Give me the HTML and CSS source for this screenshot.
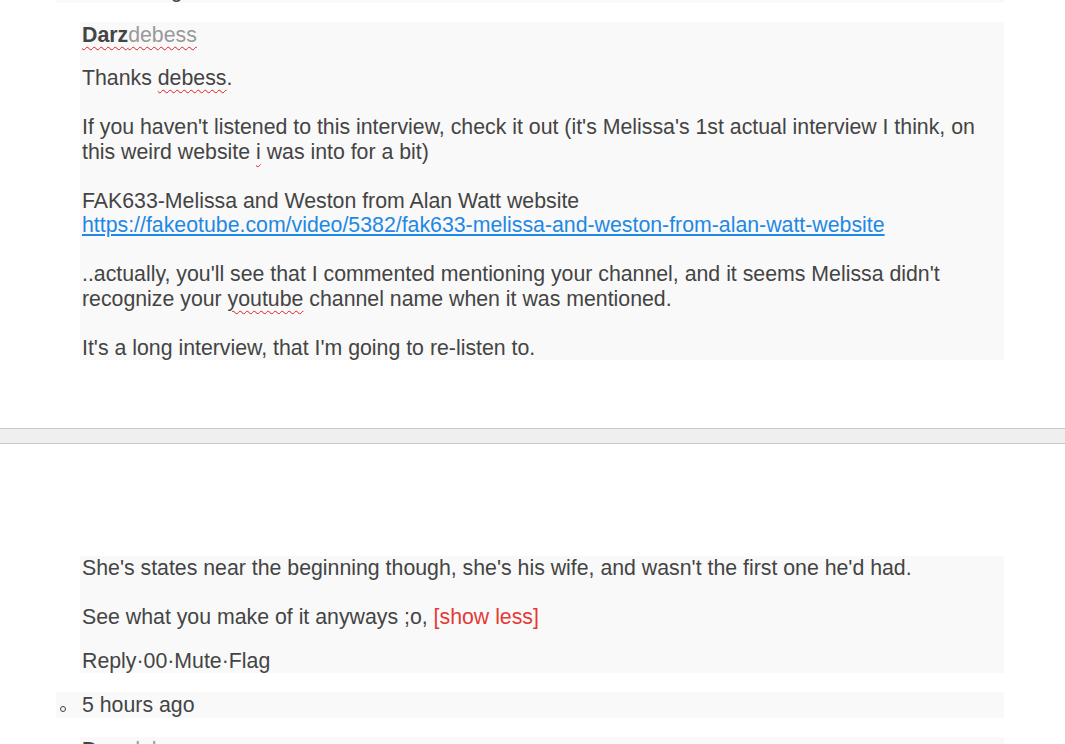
FILE: index.html
```html
<!DOCTYPE html>
<html>
<head>
<meta charset="utf-8">
<link rel="stylesheet" href="styles.css">
</head>
<body>
<div class="thread">
  <ul class="meta-list meta-list--top">
    <li class="meta-row">5 hours ago</li>
  </ul>
  <div class="comment">
    <div class="comment-head"><span class="spell"><b class="author">Darz</b><span class="reply-to">debess</span></span></div>
    <div class="comment-body">
      <p>Thanks <span class="spell">debess</span>.</p>
      <p>If you haven't listened to this interview, check it out (it's Melissa's 1st actual interview I think, on this weird website <span class="spell">i</span> was into for a bit)</p>
      <p>FAK633-Melissa and Weston from Alan Watt website<br><a class="link" href="#">https://fakeotube.com/video/5382/fak633-melissa-and-weston-from-alan-watt-website</a></p>
      <p>..actually, you'll see that I commented mentioning your channel, and it seems Melissa didn't recognize your <span class="spell">youtube</span> channel name when it was mentioned.</p>
      <p class="last">It's a long interview, that I'm going to re-listen to.</p>
    </div>
  </div>
</div>

<div class="separator"></div>

<div class="thread thread--second">
  <div class="comment">
    <div class="comment-body">
      <p>She's states near the beginning though, she's his wife, and wasn't the first one he'd had.</p>
      <p class="tight">See what you make of it anyways ;o, <a class="show-less" href="#">[show less]</a></p>
    </div>
    <div class="actions">Reply<span class="dot">·</span>00<span class="dot">·</span>Mute<span class="dot">·</span>Flag</div>
  </div>
  <ul class="meta-list">
    <li class="meta-row">5 hours ago</li>
  </ul>
  <div class="comment">
    <div class="comment-head"><span class="spell"><b class="author">Darz</b><span class="reply-to">debess</span></span></div>
  </div>
</div>
</body>
</html>
```
FILE: styles.css
```css
html, body {
  margin: 0;
  padding: 0;
  background: #ffffff;
}
body {
  font-family: "Liberation Sans", Arial, sans-serif;
  font-size: 21.3px;
  line-height: 24.5px;
  color: #444444;
  overflow: hidden;
}
.thread {
  margin: 0 61px 0 56px;
  display: flex;
  flex-direction: column;
}
.meta-list {
  list-style: none;
  margin: 0;
  padding: 0;
}
.meta-list--top {
  margin-top: -23px;
}
.meta-row {
  background: #f9f9f9;
  height: 26px;
  line-height: 26px;
  padding-left: 26px;
  position: relative;
}
.meta-row::before {
  content: "";
  position: absolute;
  left: 4px;
  top: 14px;
  width: 4px;
  height: 4px;
  border: 1px solid #444;
  border-radius: 50%;
}
.comment {
  background: #f9f9f9;
  margin: 19px 0 0 24px;
  padding-left: 2px;
}
.thread--second .comment:first-child {
  margin-top: 0;
}
.thread--second .meta-list {
  margin-top: 19px;
}
.comment-head {
  padding-top: 1px;
  line-height: 24px;
  margin-bottom: 19px;
}
.author {
  font-weight: bold;
  color: #444;
}
.reply-to {
  color: #999999;
}
.spell {
  text-decoration: underline wavy #e02020;
  text-decoration-thickness: 1px;
  text-underline-offset: 4px;
}
.comment-body p {
  margin: 0 0 24.5px 0;
}
.comment-body p.last {
  margin-bottom: 0;
}
.comment-body p.tight {
  margin-bottom: 20.5px;
}
.link {
  color: #1e88e5;
  text-decoration: underline;
}
.show-less {
  color: #e53935;
  text-decoration: none;
}
.actions {
  line-height: 22.5px;
}
.separator {
  margin-top: 68px;
  height: 14px;
  background: #efefef;
  border-top: 1px solid #c8c8c8;
  border-bottom: 1px solid #c8c8c8;
  margin-bottom: 112px;
}
```
